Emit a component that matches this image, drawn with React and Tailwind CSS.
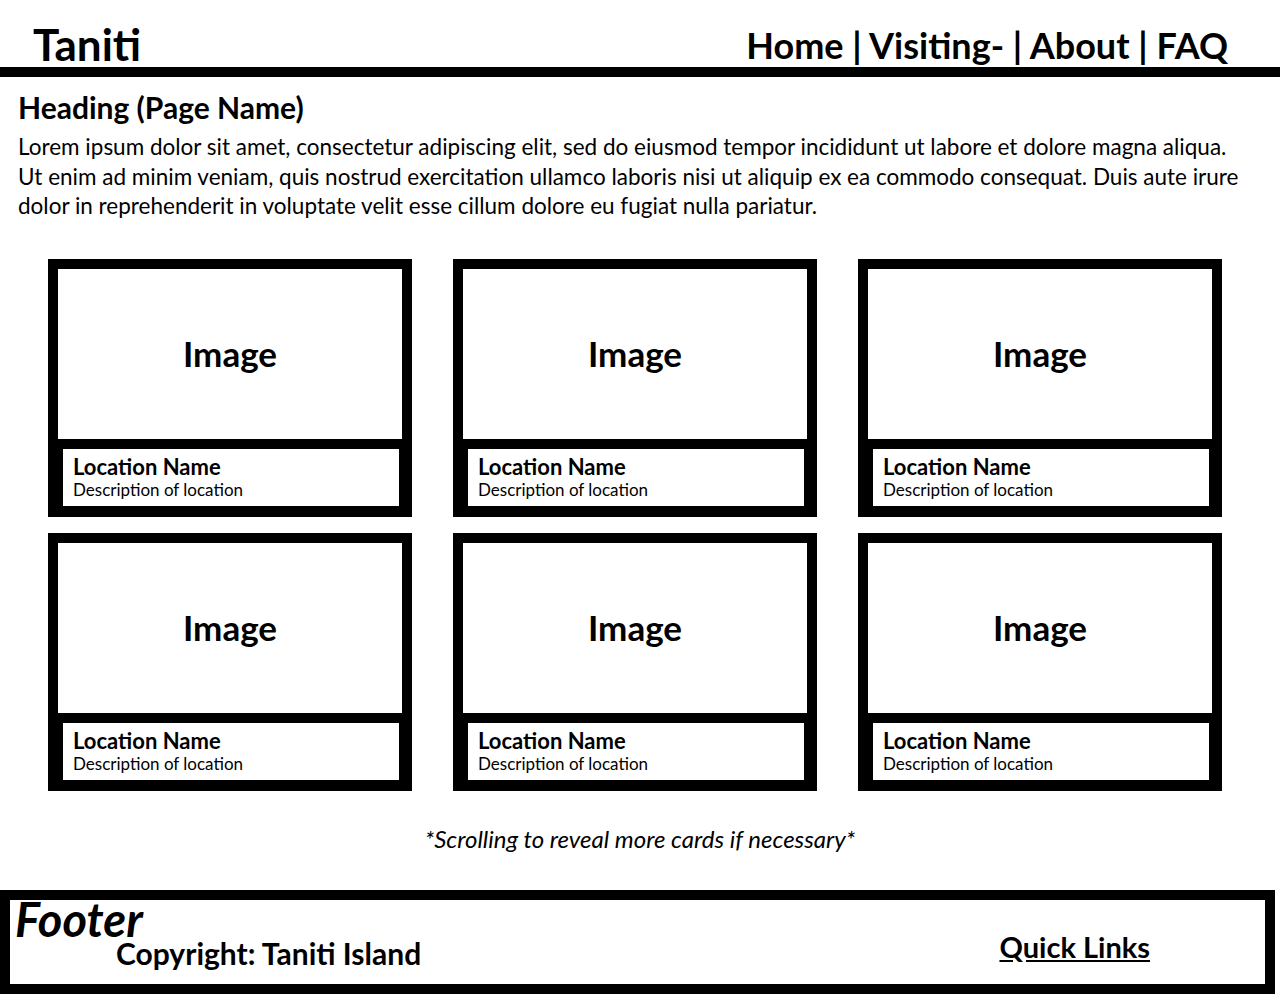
const cards = Array.from({ length: 6 }, (_, i) => i);

function Card() {
  return (
    <div className="flex h-[258px] w-[364px] flex-col bg-black p-[10px]">
      <div className="flex h-[170px] items-center justify-center bg-white">
        <span className="text-[35px] font-bold">Image</span>
      </div>
      <div className="mt-[10px] ml-[5px] mr-[3px] flex h-[57px] flex-col justify-center bg-white px-[10px]">
        <span className="text-[22px] leading-[25px] font-bold">Location Name</span>
        <span className="text-[17px] leading-[21px]">Description of location</span>
      </div>
    </div>
  );
}

export default function App() {
  return (
    <div className="min-h-[1000px] w-[1280px] bg-white text-black [font-family:Lato,'Noto_Sans',sans-serif]">
      <header className="flex h-[77px] items-end justify-between border-b-[10px] border-black pl-[33px] pr-[52px]">
        <span className="text-[44px] leading-[46px] font-bold">Taniti</span>
        <nav className="text-[36px] leading-[44px] font-bold">Home | Visiting- | About | FAQ</nav>
      </header>

      <section className="px-[18px] pt-[12px]">
        <h1 className="text-[30px] leading-[36px] font-bold">Heading (Page Name)</h1>
        <p className="mt-[7px] text-[22.5px] leading-[29.5px]">
          Lorem ipsum dolor sit amet, consectetur adipiscing elit, sed do eiusmod tempor incididunt ut labore et dolore magna aliqua.
          <br />
          Ut enim ad minim veniam, quis nostrud exercitation ullamco laboris nisi ut aliquip ex ea commodo consequat. Duis aute irure
          <br />
          dolor in reprehenderit in voluptate velit esse cillum dolore eu fugiat nulla pariatur.
        </p>
      </section>

      <div className="mt-[38px] grid w-fit grid-cols-3 gap-x-[41px] gap-y-[16px] pl-[48px]">
        {cards.map((c) => (
          <Card key={c} />
        ))}
      </div>

      <p className="mt-[30px] text-center text-[24px] italic">*Scrolling to reveal more cards if necessary*</p>

      <footer className="mt-[33px] flex h-[104px] w-[1275px] items-start justify-between border-[10px] border-black">
        <div className="pl-[5px]">
          <div className="text-[47px] leading-[38px] font-bold italic">Footer</div>
          <div className="pl-[101px] text-[30px] leading-[30px] font-bold">Copyright: Taniti Island</div>
        </div>
        <a className="mt-[30px] mr-[115px] text-[29px] leading-[34px] font-bold underline">Quick Links</a>
      </footer>
    </div>
  );
}
